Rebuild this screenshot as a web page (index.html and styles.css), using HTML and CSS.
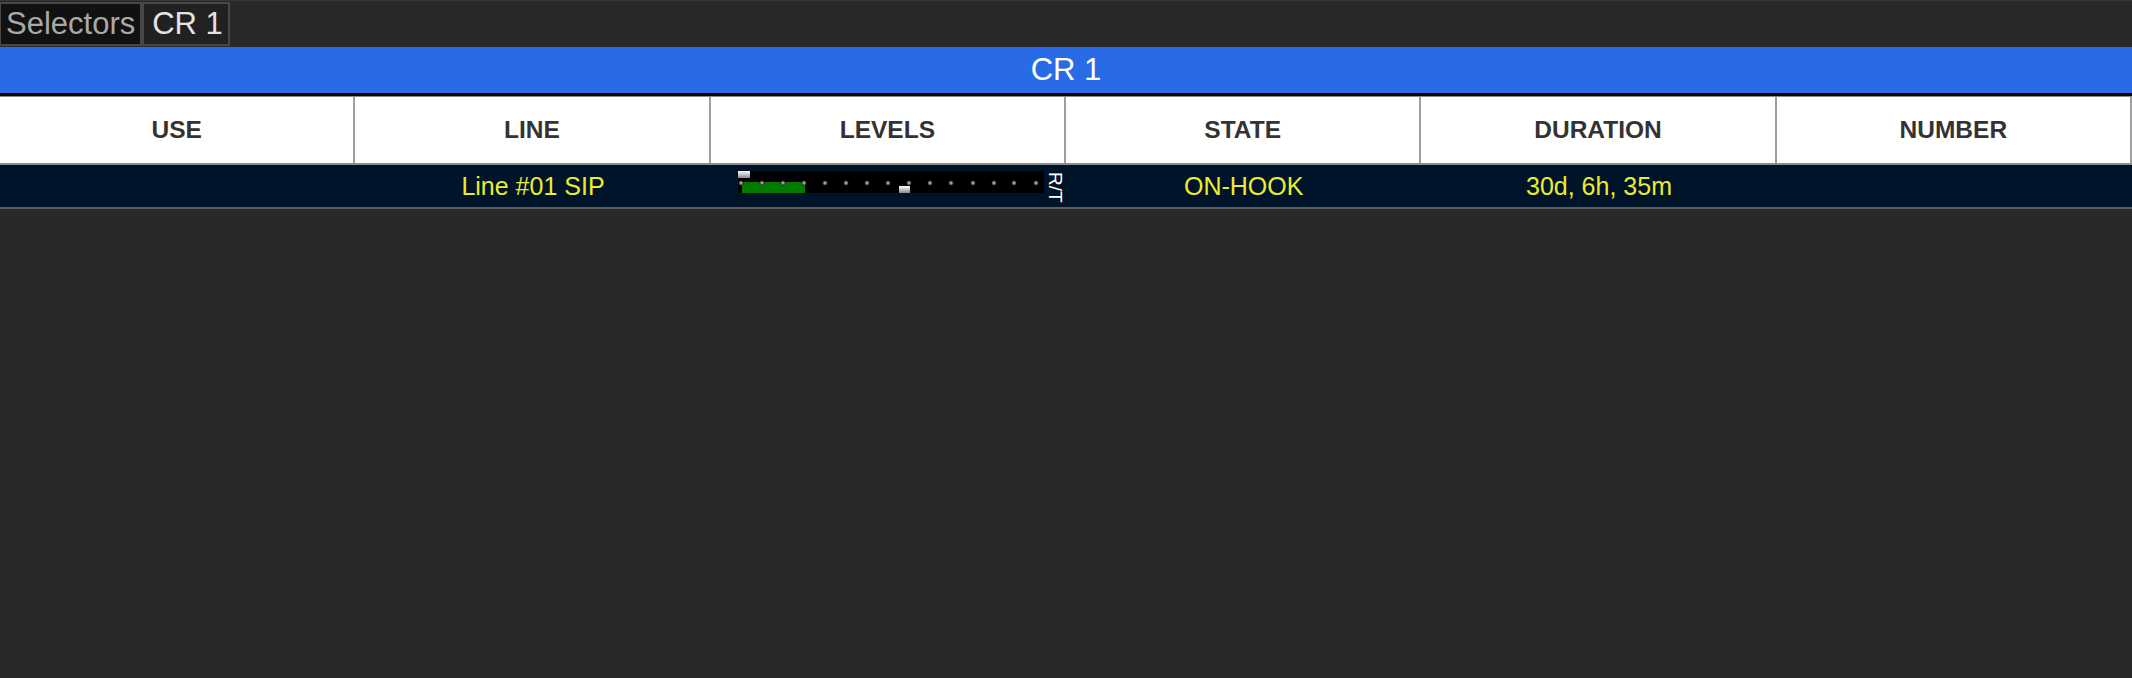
FILE: index.html
```html
<!DOCTYPE html>
<html>
<head>
<meta charset="utf-8">
<title>CR 1</title>
<link rel="stylesheet" href="styles.css">
</head>
<body>
<div class="tabs">
  <div class="tab tab-sel">Selectors</div>
  <div class="tab tab-cr">CR 1</div>
</div>
<div class="title">CR 1</div>
<div class="grid head">
  <div class="hcell">USE</div>
  <div class="hcell">LINE</div>
  <div class="hcell">LEVELS</div>
  <div class="hcell">STATE</div>
  <div class="hcell">DURATION</div>
  <div class="hcell">NUMBER</div>
</div>
<div class="grid row">
  <div class="cell"></div>
  <div class="cell">Line #01 SIP</div>
  <div class="cell levels">
    <svg class="meter" width="306" height="22" viewBox="0 0 306 22">
      <defs>
        <linearGradient id="mk" x1="0" y1="0" x2="0" y2="1">
          <stop offset="0" stop-color="#ffffff"/>
          <stop offset="1" stop-color="#8a8a8a"/>
        </linearGradient>
        <radialGradient id="dot">
          <stop offset="0" stop-color="#c4c4c4"/>
          <stop offset="0.35" stop-color="#8a8a8a"/>
          <stop offset="0.7" stop-color="#3a3a3a"/>
          <stop offset="1" stop-color="#000" stop-opacity="0"/>
        </radialGradient>
      </defs>
      <rect x="0" y="0" width="306" height="22" fill="#000"/>
      <rect x="4" y="11" width="63" height="11" fill="#007b00"/>
      <g fill="url(#dot)">
        <circle cx="3" cy="12" r="3"/>
        <circle cx="24" cy="12" r="3"/>
        <circle cx="45" cy="12" r="3"/>
        <circle cx="66" cy="12" r="3"/>
        <circle cx="87" cy="12" r="3"/>
        <circle cx="108" cy="12" r="3"/>
        <circle cx="129" cy="12" r="3"/>
        <circle cx="150" cy="12" r="3"/>
        <circle cx="171" cy="12" r="3"/>
        <circle cx="192" cy="12" r="3"/>
        <circle cx="213" cy="12" r="3"/>
        <circle cx="235" cy="12" r="3"/>
        <circle cx="256" cy="12" r="3"/>
        <circle cx="276" cy="12" r="3"/>
        <circle cx="298" cy="12" r="3"/>
      </g>
      <rect x="0" y="0" width="12" height="7" fill="url(#mk)"/>
      <rect x="161" y="15" width="11" height="7" fill="url(#mk)"/>
    </svg>
    <span class="rt">R/T</span>
  </div>
  <div class="cell">ON-HOOK</div>
  <div class="cell">30d, 6h, 35m</div>
  <div class="cell"></div>
</div>
</body>
</html>
```
FILE: styles.css
```css
html, body {
  margin: 0;
  padding: 0;
}
body {
  background: #292929;
  font-family: "Liberation Sans", Arial, sans-serif;
  min-height: 678px;
  border-top: 1px solid #363636;
  box-sizing: border-box;
}
.tabs {
  display: flex;
  padding-top: 1px;
  height: 46px;
  box-sizing: border-box;
}
.tab {
  height: 44px;
  box-sizing: border-box;
  border: 2px solid #474747;
  font-size: 31px;
  line-height: 40px;
  white-space: nowrap;
}
.tab-sel {
  background: #111111;
  color: #a9a9a9;
  padding: 0 5px 0 5px;
  border-left-width: 1px;
}
.tab-cr {
  background: #212121;
  color: #e4e4e4;
  padding: 0 5px 0 8px;
}
.title {
  background: #286be4;
  color: #ffffff;
  font-size: 31px;
  height: 46px;
  line-height: 46px;
  text-align: center;
  border-bottom: 3px solid #000000;
}
.grid {
  display: grid;
  grid-template-columns: repeat(6, 1fr);
}
.head {
  background: #ffffff;
  border-top: 1px solid #8a8a8a;
  border-bottom: 2px solid #8c8c8c;
}
.hcell {
  height: 66px;
  line-height: 66px;
  text-align: center;
  font-weight: bold;
  font-size: 24.5px;
  color: #333333;
  border-right: 2px solid #9e9e9e;
}
.row {
  background: #001429;
  border-bottom: 2px solid #5c5c5c;
}
.cell {
  height: 42px;
  line-height: 42px;
  text-align: center;
  font-size: 25px;
  color: #ecec2e;
}
.levels {
  display: flex;
  align-items: flex-start;
  padding: 6px 0 0 27px;
  box-sizing: border-box;
  line-height: normal;
}
.meter {
  display: block;
  flex: none;
}
.rt {
  writing-mode: vertical-rl;
  color: #ffffff;
  font-size: 19px;
  line-height: 15px;
  margin: 1px 0 0 4px;
}
```
